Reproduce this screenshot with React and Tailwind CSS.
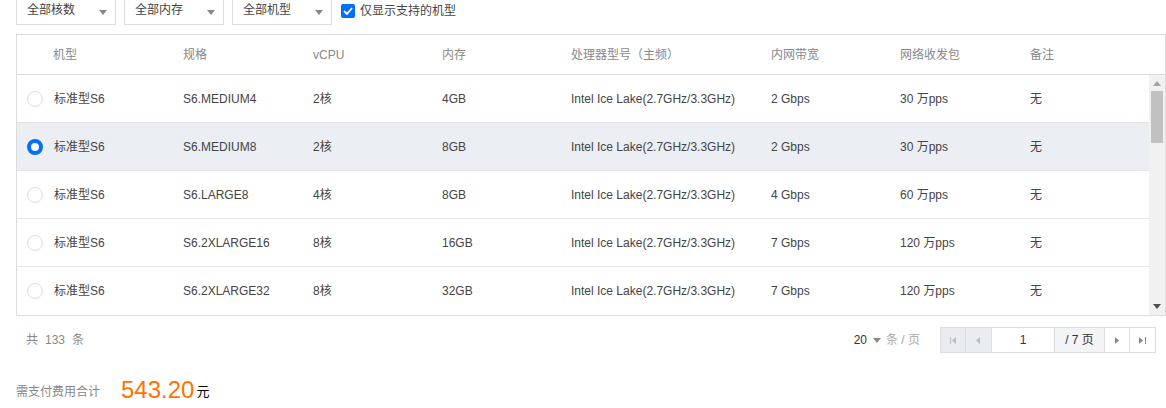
import React from "react";

const rows = [
  { spec: "S6.MEDIUM4", cpu: "2核", mem: "4GB", bw: "2 Gbps", pps: "30 万pps" },
  { spec: "S6.MEDIUM8", cpu: "2核", mem: "8GB", bw: "2 Gbps", pps: "30 万pps", selected: true },
  { spec: "S6.LARGE8", cpu: "4核", mem: "8GB", bw: "4 Gbps", pps: "60 万pps" },
  { spec: "S6.2XLARGE16", cpu: "8核", mem: "16GB", bw: "7 Gbps", pps: "120 万pps" },
  { spec: "S6.2XLARGE32", cpu: "8核", mem: "32GB", bw: "7 Gbps", pps: "120 万pps" },
];

const font = { fontFamily: '"Liberation Sans", Arial, "Noto Sans CJK SC", sans-serif' };

const Caret = ({ className = "" }) => (
  <svg width="8" height="5" viewBox="0 0 8 5" className={className}>
    <path d="M0 0h8L4 5z" fill="currentColor" />
  </svg>
);

const Select = ({ label }) => (
  <div className="w-[100px] h-[36px] -mt-[11px] border border-[#dddddd] bg-white flex items-end pb-[5px] pl-[10px] pr-[8px] justify-between">
    <span className="text-[12px] text-[#444]">{label}</span>
    <Caret className="text-[#888] mb-[4px]" />
  </div>
);

const Radio = ({ checked }) =>
  checked ? (
    <span className="w-[16px] h-[16px] rounded-full border-[4px] border-[#006eff] bg-white shrink-0" />
  ) : (
    <span className="w-[16px] h-[16px] rounded-full border border-[#dddddd] bg-white shrink-0" />
  );

// column starts, measured from table left edge (x=16)
const cols = "grid grid-cols-[166px_130px_129px_129px_200px_129px_130px_1fr]";

export default function App() {
  return (
    <div className="w-[1166px] h-[408px] bg-white overflow-hidden text-[12px] text-[#444]" style={font}>
      {/* filters */}
      <div className="flex items-start gap-[8px] pl-[16px] h-[34px]">
        <Select label="全部核数" />
        <Select label="全部内存" />
        <Select label="全部机型" />
        <label className="flex items-center gap-[5px] ml-[1px] mt-[2px]">
          <span className="w-[14px] h-[14px] bg-[#006eff] rounded-[2px] flex items-center justify-center">
            <svg width="10" height="8" viewBox="0 0 10 8">
              <path d="M1 4l3 3 5-6" stroke="white" strokeWidth="1.8" fill="none" />
            </svg>
          </span>
          <span className="text-[12px]">仅显示支持的机型</span>
        </label>
      </div>

      {/* table */}
      <div className="ml-[16px] w-[1150px] border border-[#dddddd]">
        <div className={`${cols} h-[40px] items-center text-[#888] border-b border-[#dddddd] pr-[16px]`}>
          <span className="pl-[36px]">机型</span>
          <span>规格</span>
          <span>vCPU</span>
          <span>内存</span>
          <span>处理器型号（主频）</span>
          <span>内网带宽</span>
          <span>网络收发包</span>
          <span>备注</span>
        </div>
        <div className="flex">
          <div className="flex-1">
            {rows.map((r, i) => (
              <div
                key={i}
                className={`${cols} h-[48px] items-center ${i < rows.length - 1 ? "border-b border-[#e5e5e5]" : ""} ${r.selected ? "bg-[#ebeef2]" : "bg-white"}`}
              >
                <span className="flex items-center gap-[11px] pl-[10px]">
                  <Radio checked={r.selected} />
                  标准型S6
                </span>
                <span>{r.spec}</span>
                <span>{r.cpu}</span>
                <span>{r.mem}</span>
                <span>Intel Ice Lake(2.7GHz/3.3GHz)</span>
                <span>{r.bw}</span>
                <span>{r.pps}</span>
                <span>无</span>
              </div>
            ))}
          </div>
          {/* scrollbar */}
          <div className="w-[16px] bg-[#f1f1f1] flex flex-col items-center">
            <Caret className="text-[#a3a3a3] rotate-180 mt-[6px] mb-[5px]" />
            <div className="w-[12px] h-[52px] bg-[#c1c1c1]" />
            <div className="flex-1" />
            <Caret className="text-[#505050] mb-[6px]" />
          </div>
        </div>
      </div>

      {/* pager */}
      <div className="flex items-center justify-between ml-[16px] w-[1140px] h-[48px] pl-[10px]">
        <span className="flex gap-[7px] text-[#888]">
          <span>共</span>
          <span>133</span>
          <span>条</span>
        </span>
        <div className="flex items-center">
          <span className="text-[#333]">20</span>
          <Caret className="text-[#888] ml-[6px] mr-[5px]" />
          <span className="text-[#aaa]">条 / 页</span>
          <div className="ml-[20px] flex h-[26px] border border-[#dddddd]">
            <span className="w-[25px] bg-[#e9ecf1] border-r border-[#dddddd] flex items-center justify-center">
              <svg width="7" height="7" viewBox="0 0 7 7"><path d="M0 0h1v7H0zM6 0v7L2 3.5z" fill="#bbb" /></svg>
            </span>
            <span className="w-[26px] bg-[#e9ecf1] border-r border-[#dddddd] flex items-center justify-center">
              <svg width="5" height="7" viewBox="0 0 5 7"><path d="M4 0v7L0 3.5z" fill="#bbb" /></svg>
            </span>
            <span className="w-[63px] bg-white border-r border-[#dddddd] flex items-center justify-center text-[#333]">1</span>
            <span className="w-[50px] bg-[#f3f4f7] border-r border-[#dddddd] flex items-center justify-center text-[#333]">/ 7 页</span>
            <span className="w-[25px] bg-white border-r border-[#dddddd] flex items-center justify-center">
              <svg width="5" height="7" viewBox="0 0 5 7"><path d="M0 0v7l4-3.5z" fill="#888" /></svg>
            </span>
            <span className="w-[25px] bg-white flex items-center justify-center">
              <svg width="7" height="7" viewBox="0 0 7 7"><path d="M0 0v7l4-3.5zM6 0h1v7H6z" fill="#888" /></svg>
            </span>
          </div>
        </div>
      </div>

      {/* total */}
      <div className="flex items-end pl-[16px] mt-[12px]">
        <span className="text-[12px] text-[#888] mb-[3px]">需支付费用合计</span>
        <span className="ml-[21px] text-[24px] leading-[28px] text-[#ff7200]">543.20</span>
        <span className="ml-[2px] text-[13px] text-[#000] mb-[3px]">元</span>
      </div>
    </div>
  );
}
